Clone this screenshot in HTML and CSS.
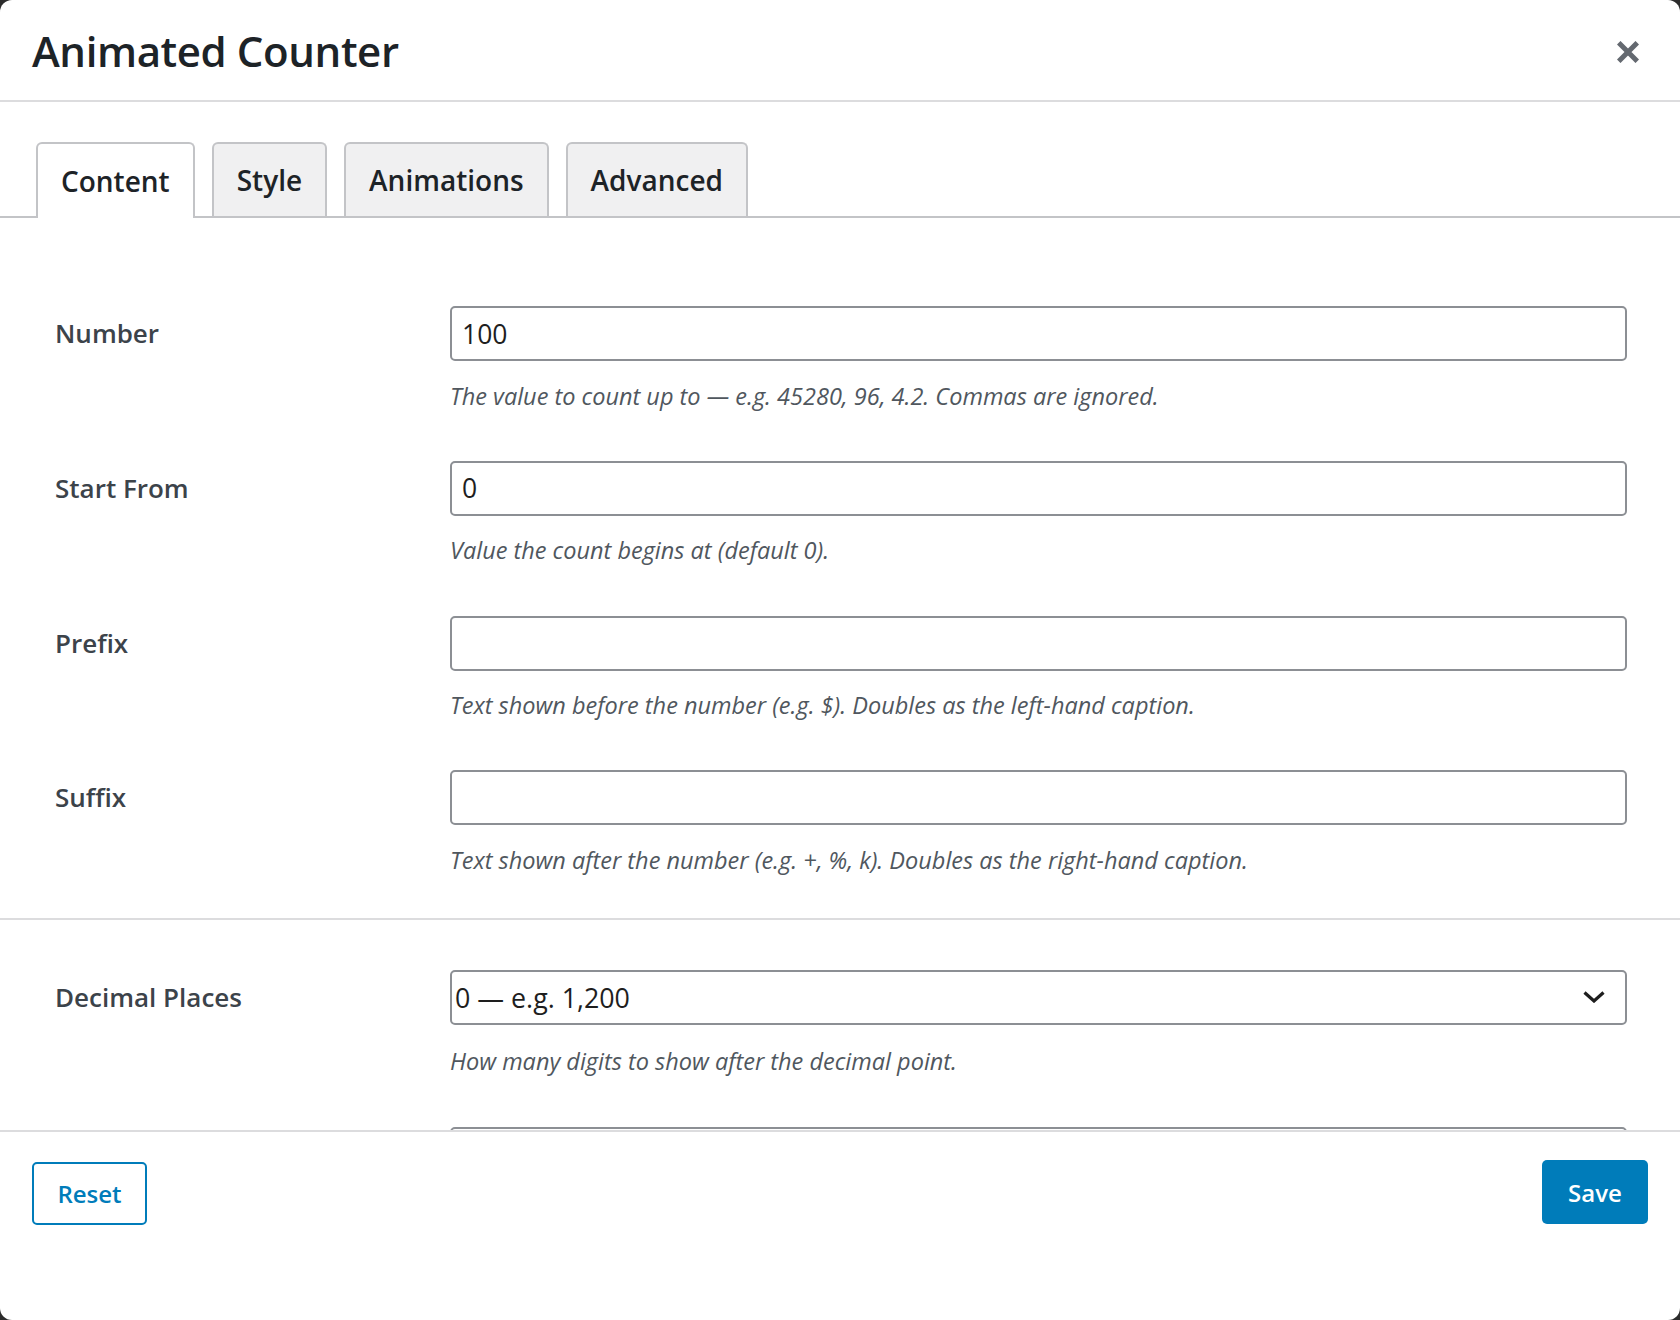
FILE: index.html
```html
<!DOCTYPE html>
<html lang="en">
<head>
<meta charset="utf-8">
<title>Animated Counter</title>
<link rel="stylesheet" href="styles.css">
</head>
<body>
<div class="modal">
  <header class="modal-header">
    <h1 class="modal-title">Animated Counter</h1>
    <button class="close-btn" type="button" aria-label="Close">
      <svg width="22" height="22" viewBox="0 0 22 22" aria-hidden="true"><path d="M3.5 3.5 L18.5 18.5 M18.5 3.5 L3.5 18.5" stroke="#646970" stroke-width="5" stroke-linecap="square" fill="none"/></svg>
    </button>
  </header>

  <nav class="tabs">
    <div class="tab active">Content</div>
    <div class="tab">Style</div>
    <div class="tab">Animations</div>
    <div class="tab">Advanced</div>
  </nav>

  <div class="modal-body">
    <section class="section section-first">
      <div class="field">
        <label class="field-label">Number</label>
        <div class="field-control">
          <input class="text-input" type="text" value="100">
          <p class="help">The value to count up to — e.g. 45280, 96, 4.2. Commas are ignored.</p>
        </div>
      </div>
      <div class="field">
        <label class="field-label">Start From</label>
        <div class="field-control">
          <input class="text-input" type="text" value="0">
          <p class="help">Value the count begins at (default 0).</p>
        </div>
      </div>
      <div class="field">
        <label class="field-label">Prefix</label>
        <div class="field-control">
          <input class="text-input" type="text" value="">
          <p class="help">Text shown before the number (e.g. $). Doubles as the left-hand caption.</p>
        </div>
      </div>
      <div class="field">
        <label class="field-label">Suffix</label>
        <div class="field-control">
          <input class="text-input" type="text" value="">
          <p class="help">Text shown after the number (e.g. +, %, k). Doubles as the right-hand caption.</p>
        </div>
      </div>
    </section>

    <section class="section section-second">
      <div class="field">
        <label class="field-label">Decimal Places</label>
        <div class="field-control">
          <div class="select">
            <span class="select-value">0 — e.g. 1,200</span>
            <svg class="chevron" width="22" height="12" viewBox="0 0 22 12" aria-hidden="true"><path d="M1.5 1.5 L11 10 L20.5 1.5" stroke="#1e1e1e" stroke-width="3.2" fill="none"/></svg>
          </div>
          <p class="help help-second">How many digits to show after the decimal point.</p>
        </div>
      </div>
      <div class="field">
        <span class="field-label"></span>
        <div class="field-control">
          <input class="text-input" type="text" value="" aria-label="More settings">
        </div>
      </div>
    </section>
  </div>

  <footer class="modal-footer">
    <button class="btn btn-secondary" type="button">Reset</button>
    <button class="btn btn-primary" type="button">Save</button>
  </footer>
</div>
</body>
</html>
```

FILE: styles.css
```css
html, body {
  margin: 0;
  padding: 0;
}

body {
  background: #2c2c2c;
  font-family: "Open Sans", "Noto Sans", sans-serif;
  color: #1d2327;
}

.modal {
  width: 1680px;
  height: 1320px;
  background: #ffffff;
  border-radius: 12px;
  overflow: hidden;
  display: flex;
  flex-direction: column;
}

/* Header */
.modal-header {
  height: 102px;
  flex: none;
  box-sizing: border-box;
  padding: 0 41px 0 32px;
  display: flex;
  align-items: center;
  justify-content: space-between;
  border-bottom: 2px solid #dcdcde;
}

.modal-title {
  margin: 0;
  font-size: 42px;
  line-height: 57px;
  font-weight: 600;
  color: #1d2327;
  letter-spacing: -0.4px;
}

.close-btn {
  border: 0;
  background: transparent;
  padding: 0;
  width: 22px;
  height: 22px;
  display: flex;
  cursor: pointer;
  margin-top: 4px;
}

/* Tabs */
.tabs {
  flex: none;
  display: flex;
  align-items: flex-end;
  gap: 17px;
  padding: 40px 0 0 36px;
  border-bottom: 2px solid #c3c4c7;
}

.tab {
  height: 74px;
  box-sizing: border-box;
  padding: 0 23px;
  border: 2px solid #c3c4c7;
  border-bottom: 0;
  border-radius: 6px 6px 0 0;
  background: #f0f0f1;
  display: flex;
  align-items: center;
  font-size: 28px;
  font-weight: 600;
  color: #1d2327;
}

.tab.active {
  height: 76px;
  margin-bottom: -2px;
  background: #ffffff;
}

/* Body */
.modal-body {
  flex: 1;
  overflow: hidden;
}

.section {
  padding: 0 53px 0 55px;
}

.section-first {
  padding-top: 88px;
  padding-bottom: 42px;
  border-bottom: 2px solid #dcdcde;
}

.section-second {
  padding-top: 50px;
}

.field {
  display: grid;
  grid-template-columns: 395px 1fr;
}

.field + .field {
  margin-top: 49.25px;
}

.field-label {
  font-size: 26px;
  line-height: 55px;
  font-weight: 600;
  color: #3c434a;
}

.field-control {
  display: flex;
  flex-direction: column;
}

.text-input {
  height: 55px;
  box-sizing: border-box;
  margin: 0;
  padding: 0 10px;
  border: 2px solid #8c8f94;
  border-radius: 5px;
  background: #ffffff;
  font-family: inherit;
  font-size: 26.5px;
  color: #1e1e1e;
  outline: none;
}

.select {
  height: 55px;
  box-sizing: border-box;
  padding: 0 20px 0 3px;
  border: 2px solid #8c8f94;
  border-radius: 5px;
  background: #ffffff;
  display: flex;
  align-items: center;
  justify-content: space-between;
  font-size: 26.8px;
  color: #1e1e1e;
}

.chevron {
  flex: none;
}

.help {
  margin: 19.5px 0 0;
  font-size: 23.5px;
  line-height: 31px;
  font-style: italic;
  color: #50575e;
}

.help-second {
  margin-top: 21.5px;
}

/* Footer */
.modal-footer {
  flex: none;
  height: 190px;
  box-sizing: border-box;
  padding: 28px 32px 0;
  border-top: 2px solid #dcdcde;
  display: flex;
  align-items: flex-start;
  justify-content: space-between;
}

.btn {
  height: 64px;
  box-sizing: border-box;
  border-radius: 5px;
  font-family: inherit;
  font-size: 24px;
  font-weight: 600;
  cursor: pointer;
  margin: 0;
}

.btn-secondary {
  width: 115px;
  height: 63px;
  margin-top: 2px;
  background: #ffffff;
  color: #007cba;
  border: 2px solid #007cba;
}

.btn-primary {
  width: 106px;
  background: #007cba;
  color: #ffffff;
  border: 0;
}
```
